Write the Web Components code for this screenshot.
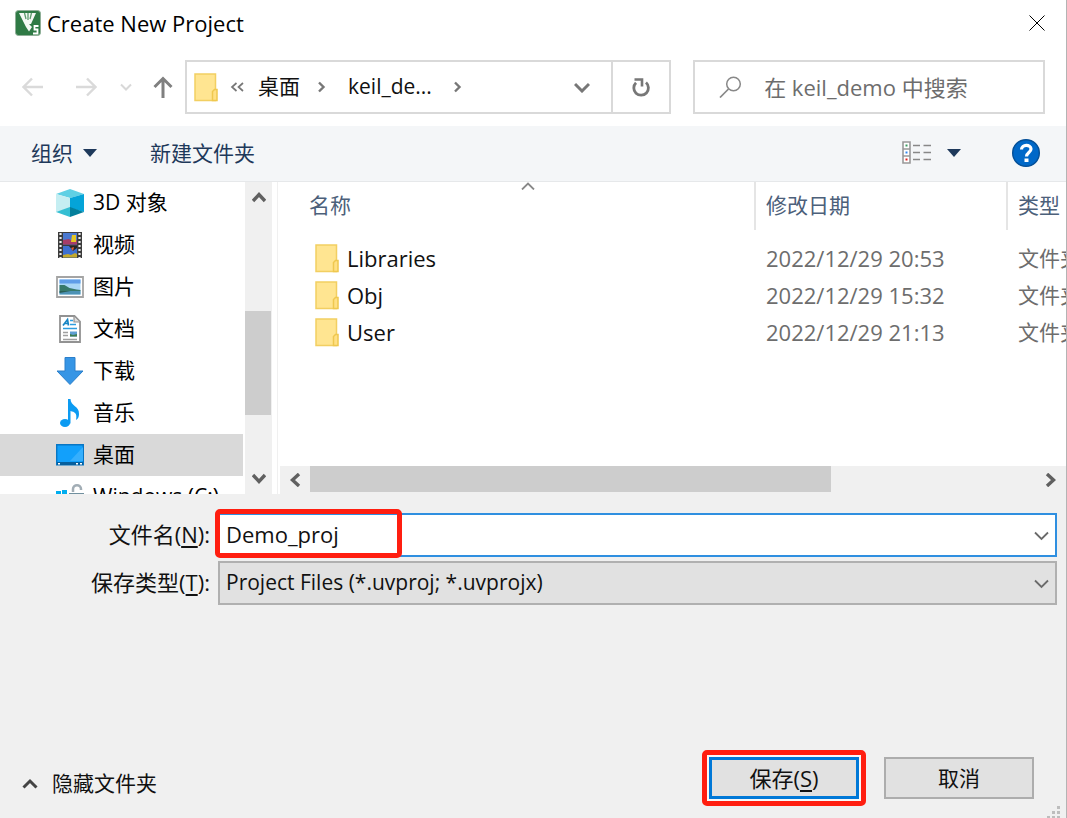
<!DOCTYPE html>
<html lang="zh-CN">
<head>
<meta charset="utf-8">
<title>Create New Project</title>
<style>
  html, body {
    margin: 0;
    height: 100%;
  }
  body {
    font-family: "Open Sans", "Noto Sans CJK SC", sans-serif;
    font-size: 21px;
    line-height: 28px;
    color: #111;
    overflow: hidden;
  }
</style>
</head>
<body>
<save-dialog>
  <title-bar slot="title">Create New Project</title-bar>
  <nav-bar slot="nav"></nav-bar>
  <command-bar slot="commands"></command-bar>
  <folder-tree slot="tree">
    <tree-item icon="cube">3D 对象</tree-item>
    <tree-item icon="video">视频</tree-item>
    <tree-item icon="picture">图片</tree-item>
    <tree-item icon="document">文档</tree-item>
    <tree-item icon="download">下载</tree-item>
    <tree-item icon="music">音乐</tree-item>
    <tree-item icon="desktop" selected>桌面</tree-item>
    <tree-item icon="drive">Windows (C:)</tree-item>
  </folder-tree>
  <file-list slot="files"></file-list>
  <save-form slot="form"></save-form>
  <dialog-footer slot="footer"></dialog-footer>
</save-dialog>

<script>
const ICONS = {
  app: [26, 26, `
    <rect x="0.5" y="0.5" width="25" height="25" rx="3" fill="#2f7a45" stroke="#8fae97"/>
    <path d="M4 3h17l-5 11h-2l3 3-3 4.500-3-4.500z" fill="#f4f8f4"/>
    <path d="M9.500 3l1.500 6M13 3v7M16.500 3L15 9" stroke="#5d9a6e" stroke-width="1.300" fill="none"/>
    <path d="M23.500 16h-4v3.500h3v4h-4.500" stroke="#fff" stroke-width="1.800" fill="none"/>`],
  close: [16, 16, `<path d="M0.500 0.500l15 15M15.500 0.500l-15 15" stroke="#000" fill="none"/>`],
  back: [22, 20, `<path d="M21 10H2M10 1.500L1.500 10l8.500 8.500" stroke="#dadada" stroke-width="2.400" fill="none"/>`],
  forward: [22, 20, `<path d="M1 10h19M12 1.500l8.500 8.500-8.500 8.500" stroke="#dadada" stroke-width="2.400" fill="none"/>`],
  recent: [12, 8, `<path d="M1 1.500l5 5 5-5" stroke="#d8d8d8" stroke-width="2" fill="none"/>`],
  up: [20, 22, `<path d="M10 22V2.500M1.500 11L10 2.500l8.500 8.500" stroke="#808080" stroke-width="3" fill="none"/>`],
  folder: [24, 29, `
    <path d="M1 1h20.500v26.500H1z" fill="#ffe591" stroke="#f2cf62" stroke-width="1.500"/>
    <path d="M20.500 16.500h2.500v11h-4.500v-9z" fill="#ffe084" stroke="#efc84f" stroke-width="1.500"/>`],
  laquo: [14, 10, `<path d="M6.500 1L2 5l4.500 4M13 1L8.500 5l4.500 4" stroke="#777" stroke-width="1.700" fill="none"/>`],
  crumb: [8, 12, `<path d="M1 1.500L5.500 6 1 10.500" stroke="#777" stroke-width="2.400" fill="none"/>`],
  dropdown: [16, 11, `<path d="M1 2l7 7 7-7" stroke="#777" stroke-width="3" fill="none"/>`],
  refresh: [19, 21, `
    <path d="M14 5.500a7.300 7.300 0 1 1-10 .2" stroke="#777" stroke-width="2.800" fill="none"/>
    <path d="M2.500 2.500h7.500v7" stroke="#777" stroke-width="2.600" fill="none"/>`],
  search: [24, 22, `<circle cx="15.500" cy="8" r="6.800" stroke="#888" stroke-width="1.500" fill="none"/><path d="M10.500 13L2 21.500" stroke="#888" stroke-width="1.700"/>`],
  triangle: [14, 8, `<path d="M0 0h14L7 8z" fill="#1e395b"/>`],
  view: [29, 23, `
    <path d="M1 1h7v21H1zM1 8h7M1 15h7" fill="#fff" stroke="#999" stroke-width="1.600"/>
    <path d="M11 4.500h7M21.500 4.500H29M11 11.500h7M21.500 11.500H29M11 18.500h7M21.500 18.500H29" stroke="#888" stroke-width="1.600"/>
    <path d="M3.500 3.500h2v2h-2z" fill="#3a9b62"/><path d="M3.500 10.500h2v2h-2z" fill="#2f86f0"/><path d="M3.500 17.500h2v2h-2z" fill="#e02020"/>`],
  help: [28, 28, `
    <circle cx="14" cy="14" r="13.300" fill="#0068c8" stroke="#044f97" stroke-width="1.400"/>
    <path d="M9.500 10.500c0-5.500 9.500-5.500 9.500-.5 0 3.500-4.500 3.500-4.500 7.500" stroke="#fff" stroke-width="3.200" fill="none"/>
    <path d="M12.500 19.500h4v3.500h-4z" fill="#fff"/>`],
  sort: [14, 8, `<path d="M1 7.500l6-6 6 6" stroke="#888" stroke-width="1.800" fill="none"/>`],
  combo: [15, 10, `<path d="M1 1.500l6.500 6.500L14 1.500" stroke="#6a6a6a" stroke-width="1.800" fill="none"/>`],
  hide: [16, 11, `<path d="M1.500 9.500L8 3l6.500 6.500" stroke="#444" stroke-width="3" fill="none"/>`],
  scrollup: [14, 12, `<path d="M1 10l6-6.500 6 6.500" stroke="#606060" stroke-width="3.400" fill="none"/>`],
  scrolldown: [14, 12, `<path d="M1 2l6 6.500L13 2" stroke="#606060" stroke-width="3.400" fill="none"/>`],
  scrollleft: [12, 14, `<path d="M10 1L3.500 7l6.500 6" stroke="#606060" stroke-width="3.400" fill="none"/>`],
  scrollright: [12, 14, `<path d="M2 1l6.500 6L2 13" stroke="#606060" stroke-width="3.400" fill="none"/>`],
  grip: [15, 15, `<path d="M11 1h3v3h-3zM6 6h3v3H6zM11 6h3v3h-3zM1 11h3v3H1zM6 11h3v3H6zM11 11h3v3h-3z" fill="#bdbdbd"/>`],
  cube: [28, 28, `
    <path d="M14 0l14 5-14 4L0 5z" fill="#5fd0e4"/>
    <path d="M0 5l14 4v10L0 23z" fill="#c5eef2"/>
    <path d="M14 9l14-4v18l-14-4z" fill="#05a4d8"/>
    <path d="M0 23l14-5v10z" fill="#35bfd3"/>
    <path d="M14 18l14 5-14 5z" fill="#047f9c"/>`],
  video: [28, 28, `
    <path d="M2 1h24v26H2z" fill="#3c3c3c"/>
    <path d="M7 2h14v11.500H7z" fill="#4a78d0"/><path d="M7 15h14v11.500H7z" fill="#3e70d0"/>
    <path d="M7 9l6-1 3 2 5-1v4.500H7z" fill="#a63d68"/><path d="M16 4h4v7h-5z" fill="#e6c625"/>
    <path d="M13 15h8v2l-4 3z" fill="#252525"/><path d="M15 17l3-1-1 4z" fill="#e45c33"/>
    <path d="M7 24l5-1 3 1 4-2 2 1v3.500H7z" fill="#c3a92e"/>
    <path d="M4.500 2v25M23.500 2v25" stroke="#eee" stroke-width="2.200" stroke-dasharray="2 2"/>`],
  picture: [28, 22, `
    <path d="M1 1h26v20H1z" fill="#fff" stroke="#a4a4a4" stroke-width="1.800"/>
    <path d="M3.500 3.500h21v15h-21z" fill="#a9d6f6"/><path d="M3.500 3.500h21v4h-21z" fill="#5f9de8"/>
    <path d="M3.500 9l5 0 5 3 7 1.500 4 .500v1h-21z" fill="#37796b"/>
    <path d="M3.500 15h21v3.500h-21z" fill="#4d92b5"/>
    <path d="M3.500 15l11 0-11 2z" fill="#295f55"/>`],
  document: [28, 28, `
    <path d="M4 1h14.500L24 6.500V27H4z" fill="#fff" stroke="#929292" stroke-width="1.800"/>
    <path d="M18 1.500V7h5.500" fill="#ddd" stroke="#929292" stroke-width="1.200"/>
    <path d="M7 10.500l4.500-6 1 6M9 8.500h3.500" stroke="#1785c4" stroke-width="1.700" fill="none"/>
    <path d="M14 5.500h3M14 9.500h6M7 13.500h14" stroke="#2d9ddf" stroke-width="1.500"/>
    <path d="M7 17.500h5M7 20.500h5M7 24.500h14" stroke="#a0a0a0" stroke-width="1.300"/>
    <path d="M14 16.500h7v5h-7z" fill="#5e9ed2"/><path d="M14 19l3 1 4-1v2.500h-7z" fill="#3e7c50"/>`],
  download: [28, 28, `<path d="M9 .500h10V14h8L14 27.500 1 14h8z" fill="#3695e5" stroke="#2b7fca"/>`],
  music: [28, 28, `
    <ellipse cx="9" cy="24" rx="5" ry="4" fill="#0c9bf2"/>
    <path d="M12 0h2.500c0 7 9 7 8.500 15 0 3-1 5-3 6 1.500-7-1.500-8-5.500-9v12.500H12z" fill="#0c9bf2"/>`],
  desktop: [28, 22, `
    <path d="M.700.700h26.600v20H.700z" fill="#12a0fb" stroke="#0876c4" stroke-width="1.400"/>
    <path d="M14 17L27 3v14z" fill="#35affd"/>
    <path d="M1 18h26v3H1z" fill="#075f9d"/><path d="M2 19h2v1.500H2zM20 19h2v1.500h-2zM24 19h2v1.500h-2z" fill="#fff"/>`],
  drive: [28, 28, `
    <path d="M0 8h5v4H0zM6 7h5v5H6zM0 13h5v4H0zM6 13h5v4H6z" fill="#00adef"/>
    <path d="M17 9V6c0-5 8-5 8 0v1" stroke="#a2adb5" stroke-width="2.500" fill="none"/>
    <path d="M13 10h15v12H13z" fill="#71909f"/><path d="M19 13h4v3h-4z" fill="#dce4e8"/>`]
};

class UiIcon extends HTMLElement {
  connectedCallback() {
    const [w, h, body] = ICONS[this.getAttribute('name')];
    this.attachShadow({ mode: 'open' });
    this.shadowRoot.innerHTML = `
      <style>
        :host { display: inline-flex; flex: none; }
        svg { display: block; }
      </style>
      <svg width="${w}" height="${h}" viewBox="0 0 ${w} ${h}" aria-hidden="true">${body}</svg>
    `;
  }
}

class SaveDialog extends HTMLElement {
  connectedCallback() {
    this.attachShadow({ mode: 'open' });
    this.shadowRoot.innerHTML = `
      <style>
        :host {
          display: flex;
          flex-direction: column;
          box-sizing: border-box;
          min-height: 100vh;
          background: #f0f0f0;
          border-right: 1px solid #b4b4b4;
        }
        .panes {
          display: grid;
          grid-template-columns: 272px minmax(0, 1fr);
          gap: 5px;
          height: 312px;
          background: #fff;
        }
        ::slotted([slot="footer"]) { margin-top: auto; }
      </style>
      <slot name="title"></slot>
      <slot name="nav"></slot>
      <slot name="commands"></slot>
      <div class="panes">
        <slot name="tree"></slot>
        <slot name="files"></slot>
      </div>
      <slot name="form"></slot>
      <slot name="footer"></slot>
    `;
  }
}

class TitleBar extends HTMLElement {
  connectedCallback() {
    this.attachShadow({ mode: 'open' });
    this.shadowRoot.innerHTML = `
      <style>
        :host {
          display: flex;
          align-items: center;
          gap: 6px;
          height: 46px;
          padding: 0 21px 0 15px;
          background: #fff;
          color: #000;
        }
        h1 { flex: 1; margin: 0; font-size: 22px; font-weight: 400; }
        button { display: flex; padding: 0; border: 0; background: none; }
      </style>
      <ui-icon name="app"></ui-icon>
      <h1><slot></slot></h1>
      <button aria-label="关闭"><ui-icon name="close"></ui-icon></button>
    `;
  }
}

class NavBar extends HTMLElement {
  connectedCallback() {
    this.attachShadow({ mode: 'open' });
    this.shadowRoot.innerHTML = `
      <style>
        :host {
          display: grid;
          grid-template-columns: auto minmax(0, 485fr) minmax(0, 354fr);
          padding: 14px 21px 12px 6px;
          background: #fff;
        }
        button {
          display: flex;
          align-items: center;
          justify-content: center;
          padding: 0;
          border: 0;
          background: none;
          font: inherit;
          color: inherit;
        }
        .arrows {
          display: grid;
          grid-template-columns: 53px 53px 28px 45px;
        }
        .address, .search {
          display: flex;
          align-items: center;
          box-sizing: border-box;
          height: 54px;
          border: 2px solid #d9d9d9;
        }
        .address { padding-left: 7px; margin-right: 11px; }
        .address .crumb, .address .last { padding-bottom: 2px; }
        .address .crumb { margin: 0 18px 0 14px; }
        .address .last { margin: 0 22px; }
        .address ui-icon[name="laquo"] { margin-left: 12px; }
        .drop { margin-left: auto; width: 58px; height: 100%; }
        .refresh { width: 58px; height: 100%; border-left: 2px solid #d9d9d9; }
        .search { margin-left: 11px; padding-left: 23px; gap: 22px; }
        input {
          flex: 1;
          min-width: 0;
          padding: 0;
          border: 0;
          outline: 0;
          background: none;
          font: inherit;
          font-size: 22px;
        }
        input::placeholder { color: #6d6d6d; opacity: 1; }
      </style>
      <div class="arrows">
        <button aria-label="后退" disabled><ui-icon name="back"></ui-icon></button>
        <button aria-label="前进" disabled><ui-icon name="forward"></ui-icon></button>
        <button aria-label="最近浏览的位置" disabled><ui-icon name="recent"></ui-icon></button>
        <button aria-label="上移"><ui-icon name="up"></ui-icon></button>
      </div>
      <div class="address">
        <ui-icon name="folder"></ui-icon>
        <ui-icon name="laquo"></ui-icon>
        <button class="crumb">桌面</button>
        <ui-icon name="crumb"></ui-icon>
        <button class="last">keil_de...</button>
        <ui-icon name="crumb"></ui-icon>
        <button class="drop" aria-label="以前的位置"><ui-icon name="dropdown"></ui-icon></button>
        <button class="refresh" aria-label="刷新"><ui-icon name="refresh"></ui-icon></button>
      </div>
      <div class="search">
        <ui-icon name="search"></ui-icon>
        <input type="text" aria-label="搜索" placeholder="在 keil_demo 中搜索">
      </div>
    `;
  }
}

class CommandBar extends HTMLElement {
  connectedCallback() {
    this.attachShadow({ mode: 'open' });
    this.shadowRoot.innerHTML = `
      <style>
        :host {
          display: flex;
          align-items: center;
          height: 53px;
          padding: 0 26px 2px 31px;
          background: #f4f6f8;
          border-bottom: 1px solid #e6e8ea;
        }
        button {
          display: flex;
          align-items: center;
          padding: 0;
          border: 0;
          background: none;
          font: inherit;
          color: #1e395b;
        }
        .organize { gap: 10px; margin-right: 53px; }
        .view { gap: 16px; margin: 0 51px 0 auto; }
      </style>
      <button class="organize">组织 <ui-icon name="triangle"></ui-icon></button>
      <button>新建文件夹</button>
      <button class="view" aria-label="更改视图"><ui-icon name="view"></ui-icon><ui-icon name="triangle"></ui-icon></button>
      <button aria-label="帮助"><ui-icon name="help"></ui-icon></button>
    `;
  }
}

class ScrollBar extends HTMLElement {
  connectedCallback() {
    const horizontal = this.hasAttribute('horizontal');
    this.attachShadow({ mode: 'open' });
    // --before / --thumb / --after share out the track
    this.shadowRoot.innerHTML = `
      <style>
        :host {
          display: grid;
          grid-template-rows: 30px minmax(0, 1fr) 30px;
          width: 27px;
          background: #f0f0f0;
        }
        :host([horizontal]) {
          grid-template-rows: none;
          grid-template-columns: 30px minmax(0, 1fr) 30px;
          width: auto;
          height: 28px;
        }
        button {
          display: flex;
          align-items: center;
          justify-content: center;
          padding: 0;
          border: 0;
          background: none;
        }
        .track { display: flex; flex-direction: column; margin-right: 1px; }
        :host([horizontal]) .track { flex-direction: row; margin: 0 0 2px; }
        .track::before { content: ""; flex: var(--before); }
        .track::after { content: ""; flex: var(--after); }
        .thumb { flex: var(--thumb); background: #cdcdcd; }
      </style>
      <button aria-label="${horizontal ? '向左滚动' : '向上滚动'}"><ui-icon name="${horizontal ? 'scrollleft' : 'scrollup'}"></ui-icon></button>
      <div class="track"><div class="thumb"></div></div>
      <button aria-label="${horizontal ? '向右滚动' : '向下滚动'}"><ui-icon name="${horizontal ? 'scrollright' : 'scrolldown'}"></ui-icon></button>
    `;
  }
}

class FolderTree extends HTMLElement {
  connectedCallback() {
    this.attachShadow({ mode: 'open' });
    this.shadowRoot.innerHTML = `
      <style>
        :host {
          display: flex;
          min-height: 0;
          background: #fff;
        }
        .items { flex: 1; overflow: hidden; margin-right: 2px; }
        scroll-bar { --before: 99; --thumb: 104; --after: 49; }
      </style>
      <div class="items" role="tree" aria-label="文件夹"><slot></slot></div>
      <scroll-bar></scroll-bar>
    `;
  }
}

class TreeItem extends HTMLElement {
  connectedCallback() {
    this.setAttribute('role', 'treeitem');
    this.attachShadow({ mode: 'open' });
    this.shadowRoot.innerHTML = `
      <style>
        :host {
          display: flex;
          align-items: center;
          gap: 9px;
          height: 42px;
          padding-left: 56px;
          white-space: nowrap;
          color: #000;
        }
        :host([selected]) { background: #d9d9d9; }
        span { padding-bottom: 2px; }
      </style>
      <ui-icon name="${this.getAttribute('icon')}"></ui-icon>
      <span><slot></slot></span>
    `;
  }
}

class FileList extends HTMLElement {
  connectedCallback() {
    const files = [
      ['Libraries', '2022/12/29 20:53'],
      ['Obj', '2022/12/29 15:32'],
      ['User', '2022/12/29 21:13']
    ];
    this.attachShadow({ mode: 'open' });
    this.shadowRoot.innerHTML = `
      <style>
        :host {
          display: flex;
          flex-direction: column;
          min-width: 0;
          border-left: 1px solid #f0f0f0;
          padding-left: 2px;
        }
        .content { flex: 1; overflow: hidden; padding-left: 19px; }
        table {
          width: 100%;
          table-layout: fixed;
          border-collapse: separate;
          border-spacing: 0;
        }
        th, td {
          box-sizing: border-box;
          padding: 0 0 0 12px;
          text-align: left;
          font-weight: 400;
          white-space: nowrap;
          overflow: hidden;
        }
        th { position: relative; height: 48px; color: #4c607a; border-left: 2px solid #e5e5e5; padding: 0 0 2px 10px; }
        th:first-child { border-left-color: transparent; padding-left: 8px; }
        th ui-icon { position: absolute; top: 0; left: 50%; margin-left: -7px; }
        tbody::before { content: ""; display: block; height: 10px; }
        td { height: 37px; padding-bottom: 2px; color: #6d6d6d; }
        td:first-child { padding: 0 0 0 16px; color: #111; font-size: 22px; }
        .name { display: flex; align-items: center; gap: 8px; }
        .name span { padding-bottom: 2px; }
        th.date { width: 252px; }
        td.date { font-size: 22px; }
        .type { width: 60px; }
        scroll-bar { --before: 0; --thumb: 521; --after: 205; }
      </style>
      <div class="content">
        <table>
          <thead>
            <tr><th scope="col">名称<ui-icon name="sort"></ui-icon></th><th scope="col" class="date">修改日期</th><th scope="col" class="type">类型</th></tr>
          </thead>
          <tbody>
            ${files.map(([name, date]) => `<tr><td><div class="name"><ui-icon name="folder"></ui-icon><span>${name}</span></div></td><td class="date">${date}</td><td>文件夹</td></tr>`).join('')}
          </tbody>
        </table>
      </div>
      <scroll-bar horizontal></scroll-bar>
    `;
  }
}

class SaveForm extends HTMLElement {
  connectedCallback() {
    this.attachShadow({ mode: 'open' });
    this.shadowRoot.innerHTML = `
      <style>
        :host {
          display: grid;
          grid-template-columns: 210px minmax(0, 1fr);
          column-gap: 8px;
          row-gap: 4px;
          align-items: center;
          padding: 19px 9px 0 0;
        }
        label { text-align: right; font-size: 22px; padding-bottom: 2px; }
        u { text-underline-offset: 3px; }
        .field { position: relative; display: flex; }
        input, select {
          flex: 1;
          min-width: 0;
          box-sizing: border-box;
          height: 44px;
          margin: 0;
          padding: 0 40px 2px 6px;
          border: 2px solid #2f8fe0;
          border-radius: 0;
          outline: 0;
          background: #fff;
          font: inherit;
          color: inherit;
        }
        input { font-size: 22px; }
        select { appearance: none; border-color: #b0b0b0; background: #e1e1e1; }
        .field ui-icon { position: absolute; right: 8px; top: 18px; pointer-events: none; }
        /* highlight around the typed name */
        .mark {
          position: absolute;
          left: -3px;
          top: -4px;
          box-sizing: border-box;
          width: 187px;
          height: 49px;
          border: 5px solid #ff1e10;
          border-radius: 5px;
          pointer-events: none;
        }
      </style>
      <label for="name">文件名(<u>N</u>):</label>
      <div class="field">
        <input id="name" type="text" value="Demo_proj" spellcheck="false">
        <ui-icon name="combo"></ui-icon>
        <div class="mark"></div>
      </div>
      <label for="type">保存类型(<u>T</u>):</label>
      <div class="field">
        <select id="type"><option>Project Files (*.uvproj; *.uvprojx)</option></select>
        <ui-icon name="combo"></ui-icon>
      </div>
    `;
  }
}

class DialogFooter extends HTMLElement {
  connectedCallback() {
    this.attachShadow({ mode: 'open' });
    this.shadowRoot.innerHTML = `
      <style>
        :host {
          position: relative;
          display: flex;
          align-items: center;
          gap: 18px;
          padding: 0 32px 12px 22px;
        }
        button { font: inherit; color: inherit; padding: 0; }
        .hide {
          display: flex;
          align-items: center;
          gap: 14px;
          margin: 10px auto 0 0;
          border: 0;
          background: none;
        }
        .push {
          box-sizing: border-box;
          width: 150px;
          height: 42px;
          border: 2px solid #adadad;
          background: #e1e1e1;
        }
        .default { border: 3px solid #0078d7; font-size: 22px; }
        .mark {
          display: flex;
          padding: 2px;
          border: 5px solid #ff1e10;
          border-radius: 5px;
          background: #f8f8f8;
        }
        u { text-underline-offset: 3px; }
        .grip { position: absolute; right: 5px; bottom: -2px; }
      </style>
      <button class="hide"><ui-icon name="hide"></ui-icon>隐藏文件夹</button>
      <div class="mark"><button class="push default">保存(<u>S</u>)</button></div>
      <button class="push">取消</button>
      <ui-icon class="grip" name="grip"></ui-icon>
    `;
  }
}

customElements.define('ui-icon', UiIcon);
customElements.define('save-dialog', SaveDialog);
customElements.define('title-bar', TitleBar);
customElements.define('nav-bar', NavBar);
customElements.define('command-bar', CommandBar);
customElements.define('scroll-bar', ScrollBar);
customElements.define('folder-tree', FolderTree);
customElements.define('tree-item', TreeItem);
customElements.define('file-list', FileList);
customElements.define('save-form', SaveForm);
customElements.define('dialog-footer', DialogFooter);
</script>
</body>
</html>
